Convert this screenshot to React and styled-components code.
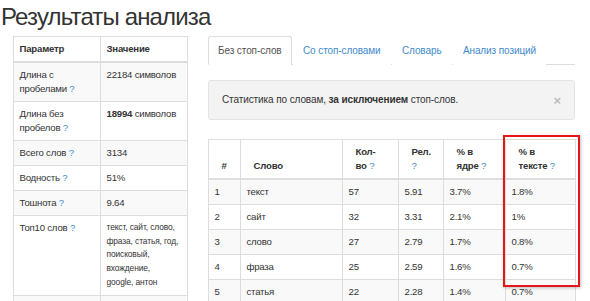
import React from "react";
import styled, { createGlobalStyle } from "styled-components";

const GlobalStyle = createGlobalStyle`
  html, body {
    margin: 0;
    padding: 0;
    background: #fff;
    overflow: hidden;
  }
  body {
    font-family: "Liberation Sans", Arial, sans-serif;
    font-size: 9.6px;
    letter-spacing: -0.2px;
    line-height: 14px;
    color: #333;
  }
`;

const Page = styled.div`
  width: 590px;
  height: 301px;
  overflow: hidden;
`;

const Title = styled.h1`
  margin: 0 0 0 1px;
  padding-top: 3px;
  font-size: 24px;
  letter-spacing: -0.85px;
  line-height: 27px;
  font-weight: 400;
  color: #333;
`;

const Columns = styled.div`
  display: flex;
  gap: 21px;
  padding-left: 13px;
  margin-top: 6px;
  align-items: flex-start;
`;

const Side = styled.div`
  width: 174px;
  flex: none;
`;

const Main = styled.div`
  width: 367px;
  flex: none;
`;

const Table = styled.table`
  width: 100%;
  border-collapse: collapse;
  table-layout: fixed;
  th, td {
    border: 1px solid #ddd;
    padding: 5px 5.5px;
    text-align: left;
    vertical-align: top;
  }
  th {
    font-weight: bold;
    border-bottom-width: 2px;
    vertical-align: bottom;
  }
  tbody tr:nth-child(odd) td {
    background: #f9f9f9;
  }
`;

const DataTable = styled(Table)`
  th {
    padding: 5px 5px 5px 12.5px;
  }
`;

const Hint = styled.span`
  color: #428bca;
  font-weight: normal;
`;

const Small = styled.td`
  && {
    font-size: 8.4px;
    letter-spacing: -0.1px;
    line-height: 13.7px;
    padding-bottom: 5px;
  }
`;

const Tabs = styled.ul`
  display: flex;
  list-style: none;
  margin: 0;
  padding: 0;
  border-bottom: 1px solid #ddd;
  width: 367px;
  font-size: 10px;
  letter-spacing: -0.1px;
`;

const Tab = styled.li`
  margin: 0 1.4px -1px 0;
  padding: 6.5px 9px 6.5px;
  border: 1px solid ${(p) => (p.$active ? "#ddd" : "transparent")};
  border-bottom-color: ${(p) => (p.$active ? "#fff" : "transparent")};
  border-radius: 3px 3px 0 0;
  background: #fff;
  color: ${(p) => (p.$active ? "#555" : "#428bca")};
  white-space: nowrap;
`;

const Alert = styled.div`
  display: flex;
  align-items: center;
  justify-content: space-between;
  margin-top: 15px;
  height: 38px;
  padding: 0 13px 0 13px;
  background: #f3f3f3;
  border: 1px solid #e3e3e3;
  border-radius: 3px;
  color: #333;
  font-size: 10px;
  letter-spacing: -0.1px;
`;

const Close = styled.span`
  font-size: 13px;
  font-weight: bold;
  color: #bdbdbd;
  line-height: 1;
`;

const TableWrap = styled.div`
  position: relative;
  margin-top: 19px;
`;

const Highlight = styled.div`
  position: absolute;
  left: 295px;
  top: -4px;
  width: 73px;
  height: 148px;
  border: 2px solid #e5161b;
  box-shadow: 1px 1px 3px rgba(0, 0, 0, 0.25);
  pointer-events: none;
`;

const params = [
  ["Длина с пробелами", "22184 символов"],
  ["Длина без пробелов", <><b>18994</b> символов</>],
  ["Всего слов", "3134"],
  ["Водность", "51%"],
  ["Тошнота", "9.64"],
];

const words = [
  ["1", "текст", "57", "5.91", "3.7%", "1.8%"],
  ["2", "сайт", "32", "3.31", "2.1%", "1%"],
  ["3", "слово", "27", "2.79", "1.7%", "0.8%"],
  ["4", "фраза", "25", "2.59", "1.6%", "0.7%"],
  ["5", "статья", "22", "2.28", "1.4%", "0.7%"],
];

const HeadCell = ({ top, bottom }) => (
  <th>
    {top}
    <br />
    {bottom} <Hint>?</Hint>
  </th>
);

export default function App() {
  return (
    <Page>
      <GlobalStyle />
      <Title>Результаты анализа</Title>
      <Columns>
        <Side>
          <Table>
            <colgroup>
              <col style={{ width: 87 }} />
              <col style={{ width: 87 }} />
            </colgroup>
            <thead>
              <tr>
                <th>Параметр</th>
                <th>Значение</th>
              </tr>
            </thead>
            <tbody>
              {params.map(([k, v], i) => (
                <tr key={i}>
                  <td>
                    {k} <Hint>?</Hint>
                  </td>
                  <td>{v}</td>
                </tr>
              ))}
              <tr>
                <td>
                  Топ10 слов <Hint>?</Hint>
                </td>
                <Small>
                  текст, сайт, слово, фраза, статья, год, поисковый,
                  <br />
                  вхождение,
                  <br />
                  google, антон
                </Small>
              </tr>
              <tr>
                <td>&nbsp;</td>
                <td>&nbsp;</td>
              </tr>
            </tbody>
          </Table>
        </Side>
        <Main>
          <Tabs>
            <Tab $active>Без стоп-слов</Tab>
            <Tab>Со стоп-словами</Tab>
            <Tab>Словарь</Tab>
            <Tab>Анализ позиций</Tab>
          </Tabs>
          <Alert>
            <span>
              Статистика по словам, <b>за исключением</b> стоп-слов.
            </span>
            <Close>×</Close>
          </Alert>
          <TableWrap>
            <DataTable>
              <colgroup>
                <col style={{ width: 32 }} />
                <col style={{ width: 102 }} />
                <col style={{ width: 56 }} />
                <col style={{ width: 45 }} />
                <col style={{ width: 62 }} />
                <col style={{ width: 70 }} />
              </colgroup>
              <thead>
                <tr>
                  <th>#</th>
                  <th>Слово</th>
                  <HeadCell top="Кол-" bottom="во" />
                  <HeadCell top="Рел." bottom="" />
                  <HeadCell top="% в" bottom="ядре" />
                  <HeadCell top="% в" bottom="тексте" />
                </tr>
              </thead>
              <tbody>
                {words.map((r) => (
                  <tr key={r[0]}>
                    {r.map((c, j) => (
                      <td key={j}>{c}</td>
                    ))}
                  </tr>
                ))}
              </tbody>
            </DataTable>
            <Highlight />
          </TableWrap>
        </Main>
      </Columns>
    </Page>
  );
}
